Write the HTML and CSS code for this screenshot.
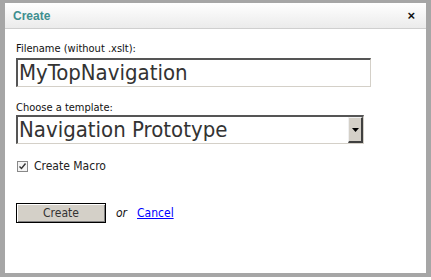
FILE: index.html
```html
<!DOCTYPE html>
<html>
<head>
<meta charset="utf-8">
<link rel="stylesheet" href="styles.css">
</head>
<body>
<div class="frame">
  <div class="dialog">
    <div class="header">
      <span class="title">Create</span>
      <span class="close">×</span>
    </div>
    <div class="content">
      <label class="label">Filename (without .xslt):</label>
      <div class="input">MyTopNavigation</div>
      <label class="label label-second">Choose a template:</label>
      <div class="select">
        <span class="select-text">Navigation Prototype</span>
        <span class="select-btn"><svg width="7" height="4" viewBox="0 0 7 4"><path d="M0 0H7L3.5 4Z" fill="#000"/></svg></span>
      </div>
      <div class="check-row">
        <span class="checkbox"><svg width="9" height="9" viewBox="0 0 9 9"><path d="M1.5 4.5L3.5 6.5L7.5 1.5" stroke="#333" stroke-width="1.4" fill="none"/></svg></span>
        <span class="check-label">Create Macro</span>
      </div>
      <div class="actions">
        <span class="button">Create</span>
        <span class="or">or</span>
        <a class="cancel" href="#">Cancel</a>
      </div>
    </div>
  </div>
</div>
</body>
</html>
```
FILE: styles.css
```css
html, body {
  margin: 0;
  padding: 0;
  background: #fff;
}
body {
  width: 431px;
  height: 280px;
  overflow: hidden;
  font-family: "DejaVu Sans Condensed", "DejaVu Sans", sans-serif;
}
.frame {
  background: #a6a6a6;
  padding: 3px 5px 4px 5px;
  height: 270px;
}
.dialog {
  background: #fff;
  height: 270px;
  display: flex;
  flex-direction: column;
}
.header {
  height: 25px;
  border-bottom: 1px solid #cfcfcf;
  background: linear-gradient(#ffffff, #ebebeb);
  display: flex;
  align-items: center;
  justify-content: space-between;
  padding: 0 11px 0 8px;
}
.title {
  font-family: "Liberation Sans", Arial, sans-serif;
  font-weight: bold;
  font-size: 12px;
  color: #3f8f8f;
}
.close {
  font-family: "Liberation Sans", Arial, sans-serif;
  font-weight: bold;
  font-size: 13px;
  color: #111;
}
.content {
  padding: 12px 0 0 11px;
  display: flex;
  flex-direction: column;
  align-items: flex-start;
}
.label {
  font-size: 11px;
  color: #111;
  line-height: 15px;
  display: block;
}
.label-second {
  margin-top: 13px;
}
.input {
  box-sizing: border-box;
  width: 355px;
  height: 29px;
  border-style: solid;
  border-width: 2px 1px 1px 2px;
  border-color: #555 #d4d0c8 #d4d0c8 #555;
  font-size: 22px;
  line-height: 25px;
  color: #333;
  padding-left: 1px;
  margin-top: 2px;
}
.select {
  box-sizing: border-box;
  width: 348px;
  height: 29px;
  border-style: solid;
  border-width: 2px 1px 1px 2px;
  border-color: #555 #d4d0c8 #d4d0c8 #555;
  display: flex;
  align-items: stretch;
}
.select-text {
  flex: 1;
  font-size: 22px;
  line-height: 25px;
  color: #333;
  padding-left: 1px;
}
.select-btn {
  box-sizing: border-box;
  width: 15px;
  background: #d4d0c8;
  border-style: solid;
  border-width: 1px 2px 2px 1px;
  border-color: #f0f0f0 #404040 #404040 #f0f0f0;
  display: flex;
  align-items: center;
  justify-content: center;
}
.check-row {
  display: flex;
  align-items: center;
  margin-top: 15px;
  margin-left: 1px;
}
.checkbox {
  box-sizing: border-box;
  width: 11px;
  height: 11px;
  border: 1px solid #888;
  background: #f4f4f4;
  display: flex;
  align-items: center;
  justify-content: center;
}
.check-label {
  font-size: 12px;
  color: #222;
  margin-left: 6px;
}
.actions {
  display: flex;
  align-items: center;
  margin-top: 30px;
}
.button {
  box-sizing: border-box;
  width: 90px;
  height: 20px;
  background: #d4d0c8;
  border: 1px solid #000;
  box-shadow: inset 1px 1px 0 #fff, inset -1px -1px 0 #808080;
  font-size: 12px;
  color: #333;
  display: flex;
  align-items: center;
  justify-content: center;
}
.or {
  font-size: 12px;
  font-style: italic;
  color: #111;
  margin-left: 10px;
}
.cancel {
  font-size: 12px;
  color: #00f;
  text-decoration: underline;
  margin-left: 10px;
}
```
